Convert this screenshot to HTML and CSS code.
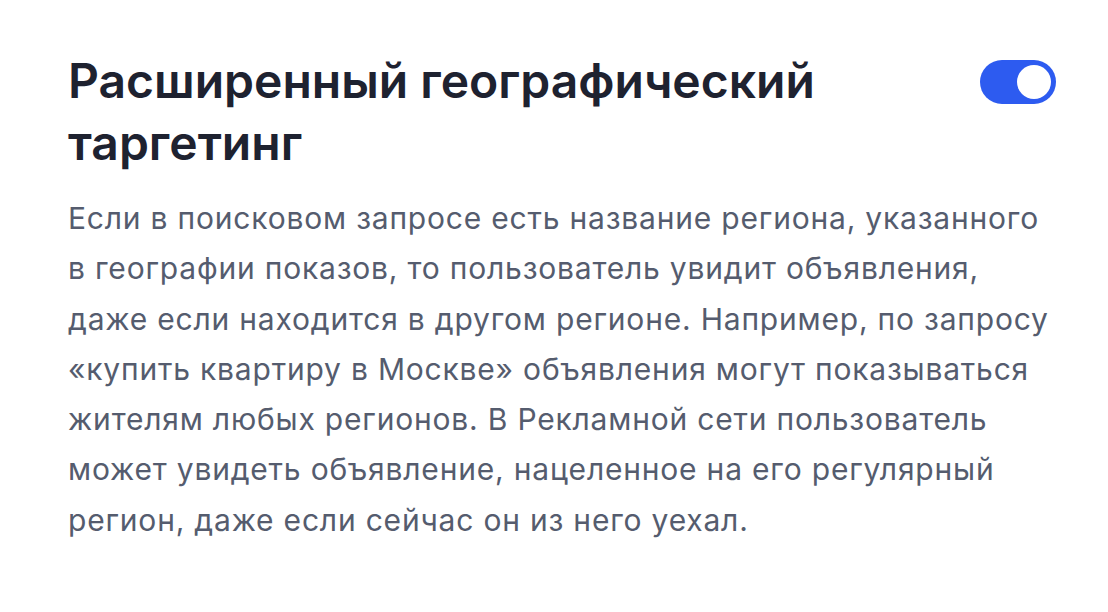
FILE: index.html
```html
<!DOCTYPE html>
<html lang="ru">
<head>
<meta charset="utf-8">
<link rel="stylesheet" href="styles.css">
</head>
<body>
<div class="card">
  <div class="head">
    <h1 class="title"><span class="line">Расширенный географический</span><span class="line">таргетинг</span></h1>
    <div class="toggle"><div class="knob"></div></div>
  </div>
  <p class="desc">
    <span class="line">Если в поисковом запросе есть название региона, указанного</span>
    <span class="line">в географии показов, то пользователь увидит объявления,</span>
    <span class="line">даже если находится в другом регионе. Например, по запросу</span>
    <span class="line">«купить квартиру в Москве» объявления могут показываться</span>
    <span class="line">жителям любых регионов. В Рекламной сети пользователь</span>
    <span class="line">может увидеть объявление, нацеленное на его регулярный</span>
    <span class="line">регион, даже если сейчас он из него уехал.</span>
  </p>
</div>
</body>
</html>
```
FILE: styles.css
```css
html, body {
  margin: 0;
  padding: 0;
  background: #ffffff;
}
body {
  width: 1108px;
  height: 612px;
  overflow: hidden;
  font-family: Inter, "Noto Sans", sans-serif;
}
.card {
  padding: 50px 52px 0 68px;
}
.head {
  display: flex;
  justify-content: space-between;
  align-items: flex-start;
}
.title {
  margin: 0;
  font-size: 48px;
  line-height: 62px;
  font-weight: 600;
  color: #1e2230;
  letter-spacing: 0;
}
.line {
  display: block;
  white-space: nowrap;
}
.toggle {
  margin-top: 10px;
  width: 76px;
  height: 44px;
  border-radius: 22px;
  background: #2d5bf0;
  display: flex;
  justify-content: flex-end;
  align-items: center;
  padding: 0 5px;
  box-sizing: border-box;
}
.knob {
  width: 34px;
  height: 34px;
  border-radius: 50%;
  background: #ffffff;
}
.desc {
  margin: 19px 0 0;
  font-size: 30px;
  line-height: 50.3px;
  letter-spacing: 0.8px;
  color: #555c6e;
}
```
